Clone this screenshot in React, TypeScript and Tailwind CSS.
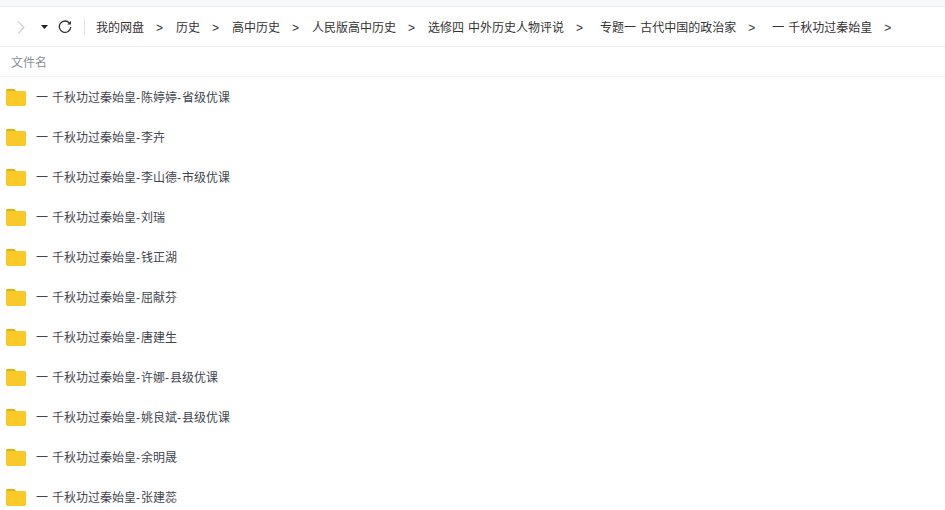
const crumbs = [
  "我的网盘",
  "历史",
  "高中历史",
  "人民版高中历史",
  "选修四 中外历史人物评说",
  "专题一 古代中国的政治家",
  "一 千秋功过秦始皇",
];

const files = [
  ["陈婷婷", "省级优课"],
  ["李卉"],
  ["李山德", "市级优课"],
  ["刘瑞"],
  ["钱正湖"],
  ["屈献芬"],
  ["唐建生"],
  ["许娜", "县级优课"],
  ["姚良斌", "县级优课"],
  ["余明晟"],
  ["张建蕊"],
];

const Dash = () => <span className="inline-block w-[5px]">-</span>;

const FolderIcon = () => (
  <svg width="20" height="17" viewBox="0 0 20 17" className="shrink-0">
    <path d="M0 3V1.500C0 .6.6 0 1.500 0H7.500C8.800 0 9.300.6 10 2.200H6V3Z" fill="#e3b00d" />
    <path d="M0 3.500C0 2.600.6 2 1.500 2h17c.9 0 1.500.6 1.500 1.500v12c0 .9-.6 1.500-1.500 1.500h-17C.6 17 0 16.400 0 15.500Z" fill="#f9ca27" />
  </svg>
);

const App = () => {
  return (
    <div className="h-[510px] w-[945px] overflow-hidden bg-white font-['Liberation_Sans','Noto_Sans_CJK_SC',sans-serif] text-xs text-[#3f4650] [word-spacing:0.7px]">
      {/* Top strip */}
      <div className="h-[7px] border-b border-[#eeeff1] bg-[#f7f8fa]"></div>

      {/* Breadcrumb toolbar */}
      <div className="flex h-10 items-center border-b border-[#eeeff1]">
        <svg width="8" height="13" viewBox="0 0 8 13" className="ml-[17px] mt-px" fill="none" stroke="#c9cdd3" strokeWidth="1.200">
          <path d="M1.200.6 7 6.500l-5.800 5.900" />
        </svg>
        <svg width="7" height="4" viewBox="0 0 7 4" className="ml-4 mt-px">
          <path d="M0 0h7L3.500 4Z" fill="#222" />
        </svg>
        <svg width="14" height="14" viewBox="0 0 14 14" className="ml-[10px]" fill="none" stroke="#333" strokeWidth="1.300">
          <path d="M11.500 3.200A5.700 5.700 0 1 0 12.700 7" />
          <path d="M9.200 4.600h3.800V1Z" fill="#333" stroke="none" />
        </svg>
        <div className="ml-3 h-[16px] w-px bg-[#dfe1e4]"></div>
        <div className="ml-[11px] mt-[2px] flex items-center whitespace-nowrap text-[#333]">
          {crumbs.map((crumb, index) => (
            <div key={crumb} className="flex items-center">
              <span>{crumb}</span>
              <span className={index === 4 || index === 5 ? "ml-3 mr-[17px] w-[7px]" : "ml-3 mr-[13px] w-[7px]"}>&gt;</span>
            </div>
          ))}
        </div>
      </div>

      {/* Column header */}
      <div className="flex h-[30px] items-center border-b border-[#f3f4f5] pl-[11px] pt-[2px] text-[#8a8f96]">文件名</div>

      {/* File list */}
      <div>
        {files.map(([teacher, level]) => (
          <div key={teacher} className="flex h-10 items-center pl-[6px]">
            <FolderIcon />
            <span className="ml-[10px] mt-[2px] whitespace-nowrap">
              一 千秋功过秦始皇
              <Dash />
              {teacher}
              {level && (
                <>
                  <Dash />
                  {level}
                </>
              )}
            </span>
          </div>
        ))}
      </div>
    </div>
  );
};

export default App;
